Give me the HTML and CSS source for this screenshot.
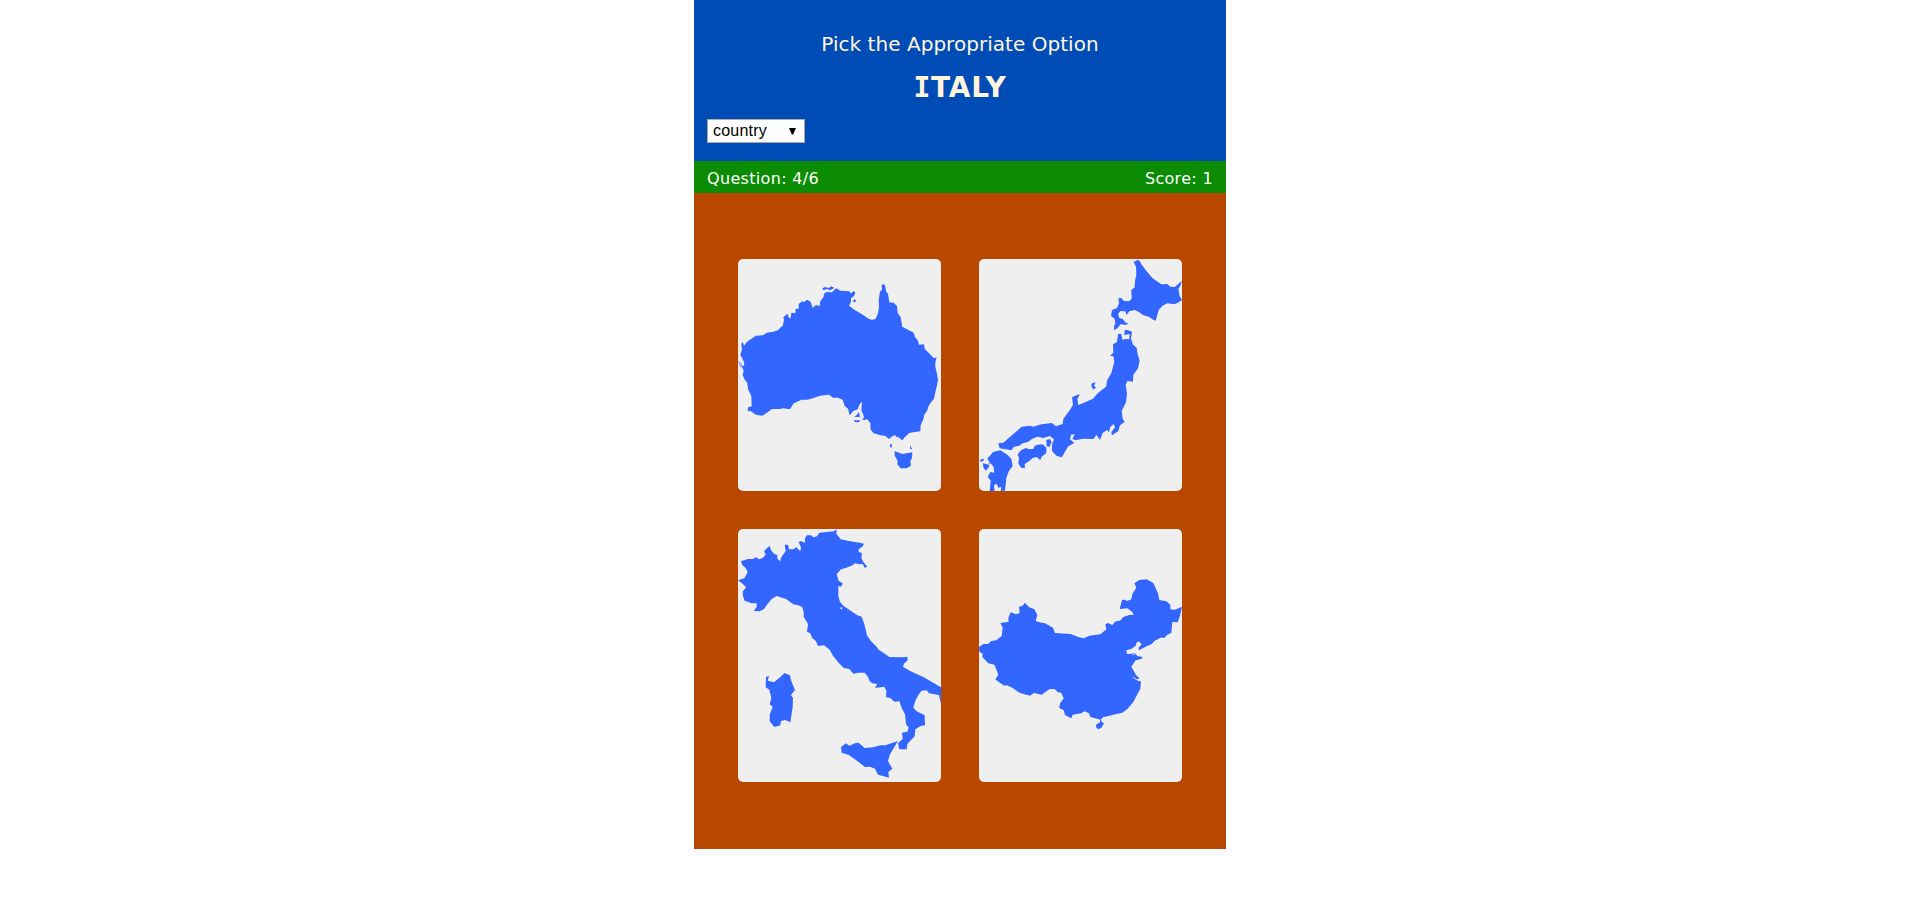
FILE: index.html
```html
<!DOCTYPE html>
<html lang="en">
<head>
<meta charset="utf-8">
<title>Pick the Appropriate Option</title>
<link rel="stylesheet" href="styles.css">
</head>
<body>
<main class="quiz">
  <header class="header">
    <p class="prompt">Pick the Appropriate Option</p>
    <h1 class="answer"><span class="serif-i">I</span>TALY</h1>
    <div class="select" role="combobox" aria-label="Category"><span class="select-text">country</span><svg class="arrow" viewBox="0 0 7 8"><path d="M0 1h7L4.2 7.5H2.8z"/></svg></div>
  </header>
  <div class="status"><span class="question">Question: 4/6</span><span class="score">Score: 1</span></div>
  <section class="board">
    <button class="card" aria-label="Australia">
      <svg class="map" viewBox="24 27 609 696">
        <path d="M38 275L42 287L50 277L62 268L78 257L99 256L110 248L130 245L145 240L152 232L158 228L162 210L160 202L172 191L177 204L182 204L184 188L196 190L197 177L206 176L206 162L217 154L221 157L232 149L242 156L248 173L258 165L269 168L271 154L281 140L282 131L290 126L306 127L318 115L332 122L358 124L362 130L372 123L376 129L371 139L363 145L363 155L357 167L374 180L391 190L404 198L413 205L426 210L437 206L444 190L447 172L446 150L450 125L456 119L455 106L460 102L466 108L468 124L474 132L478 157L491 158L501 168L503 189L512 202L517 230L531 238L551 248L555 262L563 270L567 284L582 283L584 296L600 313L612 325L620 322L616 337L616 350L621 372L624 389L620 410L616 427L612 446L604 456L596 467L592 481L583 494L580 508L572 526L571 544L550 547L538 549L525 561L517 571L505 562L498 560L495 555L487 559L477 567L465 557L450 556L440 552L431 550L422 539L421 519L410 506L405 511L396 508L402 503L400 495L394 481L396 455L389 463L383 478L370 483L359 496L354 476L344 468L338 449L324 443L309 443L297 434L270 437L248 445L233 449L215 449L198 457L190 461L180 478L160 475L149 477L126 477L115 485L97 497L77 494L63 484L53 482L54 472L65 469L64 438L54 418L52 399L43 387L38 374L41 362L36 351L43 345L41 334L31 314L36 299L34 282ZM494 603L517 612L547 607L546 624L541 634L543 647L530 655L512 655L502 643L503 632L494 617ZM277 115L285 111L296 114L304 109L313 114L300 121L291 117L280 121ZM387 486L390 501L373 501L380 495ZM372 511L391 511L387 517L374 516ZM480 583L486 583L485 593L480 591ZM540 586L547 598L541 597ZM371 148L378 150L376 157L370 156Z"/>
        <path class="coast" d="M26 334L31 350L38 351L32 338"/>
      </svg>
    </button>
    <button class="card" aria-label="Japan">
      <svg class="map" viewBox="27 27 609 696">
        <path d="M491 36L503 29L510 34L514 43L530 64L548 85L561 94L574 103L592 102L601 110L614 111L624 103L636 92L632 105L625 117L629 138L636 150L624 158L613 163L592 160L578 167L566 180L557 212L547 208L538 201L521 196L505 185L494 180L478 184L470 195L465 184L452 183L444 192L448 204L458 207L466 217L476 221L465 225L453 222L442 235L433 241L432 230L436 220L434 207L423 197L426 180L441 174L447 160L445 145L454 144L462 153L477 154L485 146L484 120L494 112L495 92L499 75L498 50ZM464 240L474 241L486 245L483 266L489 284L500 293L503 313L509 332L504 355L494 369L499 362L490 374L489 395L472 393L467 404L471 431L468 457L455 483L458 506L464 516L450 526L445 543L426 556L424 547L435 532L431 522L421 531L417 547L411 540L398 549L390 570L379 554L371 567L338 566L317 571L307 567L314 553L303 554L300 568L313 579L295 589L286 603L276 622L260 618L246 603L246 584L252 568L239 558L220 564L203 560L187 566L174 576L158 580L148 587L131 591L124 601L89 595L85 580L100 578L130 552L155 530L179 527L190 530L214 523L246 519L258 529L278 522L280 507L301 478L309 464L306 442L320 436L330 433L322 447L325 465L338 460L369 446L383 430L408 410L412 390L424 369L433 335L430 319L420 317L430 308L429 283L441 276L444 253L453 251L458 270L466 267L478 268L479 252L463 255ZM229 570L240 567L245 577L238 591L230 589ZM203 584L218 583L229 593L229 609L214 621L211 631L200 621L188 624L178 633L164 642L165 654L153 653L145 640L147 624L143 613L154 600L168 594L177 598L191 596L194 587ZM69 606L91 601L112 614L124 627L128 648L117 662L109 684L107 705L105 722L92 723L94 711L85 713L80 701L72 706L74 723L59 723L62 692L53 680L61 666L73 668L70 649L57 635L52 625L62 615ZM33 628L43 626L39 634L29 635ZM39 640L50 643L60 639L55 654L47 662L40 652ZM364 401L377 396L372 408L378 412L371 419L365 411Z"/>
        <path class="cut" d="M52 642L63 645L69 660M165 587L185 581L211 578L218 574"/>
      </svg>
    </button>
    <button class="card" aria-label="Italy">
      <svg class="map" viewBox="24 27 609 759">
        <path d="M33 123L43 121L53 117L68 117L78 112L88 118L99 113L107 104L102 93L119 77L123 91L133 102L142 105L142 116L150 124L154 112L167 93L164 74L174 74L177 88L190 88L199 82L211 94L213 82L206 67L212 63L226 68L224 57L230 46L243 46L251 52L261 49L268 38L297 35L311 34L320 28L319 41L332 58L361 64L389 68L402 71L397 80L386 88L386 96L396 99L394 114L400 126L412 140L404 143L398 132L389 133L374 130L368 136L345 145L333 148L320 163L326 182L339 191L332 200L325 198L325 229L330 245L340 257L363 273L382 286L395 290L403 312L411 346L423 364L437 377L447 390L467 403L478 411L519 412L532 410L533 421L522 431L519 440L540 453L580 471L607 487L633 502L633 552L627 525L597 520L590 511L575 512L565 525L556 542L550 563L560 574L584 586L585 616L572 618L556 628L554 649L544 659L532 672L530 688L508 688L504 670L518 656L516 638L532 635L536 623L528 612L525 583L515 564L508 544L493 545L482 535L468 531L469 512L463 500L435 504L442 492L427 490L419 484L414 471L404 458L384 458L370 461L358 447L340 443L324 426L309 407L299 389L282 376L264 378L258 364L247 354L240 339L231 336L234 313L229 303L221 291L221 276L217 262L205 256L190 253L168 237L140 228L125 237L112 253L102 267L89 274L71 273L80 261L80 250L65 250L44 242L39 229L38 215L48 202L38 191L24 181L43 175L53 157L47 144L36 134ZM163 459L180 466L183 481L195 510L183 525L189 534L188 561L181 607L166 600L153 603L151 616L133 621L119 604L119 584L128 560L119 553L124 535L118 509L107 502L108 471L117 468L113 482L132 487L151 471ZM504 663L498 673L480 703L474 723L487 746L475 756L477 773L459 768L444 764L435 746L420 740L405 741L374 717L355 704L335 698L333 681L348 670L358 677L375 670L386 668L404 684L430 682L451 676L466 676Z"/>
        <circle class="hole" cx="334" cy="265" r="3"/>
      </svg>
    </button>
    <button class="card" aria-label="China">
      <svg class="map" viewBox="27 27 609 759">
        <path d="M27 381L40 372L54 372L64 363L79 361L95 348L98 323L91 309L116 305L115 293L122 277L138 283L149 279L147 260L158 257L164 248L178 262L193 268L202 285L197 303L214 308L225 310L249 323L255 339L302 342L325 351L341 355L358 347L391 343L409 328L406 313L414 309L427 315L437 304L450 302L460 291L478 285L491 284L487 276L472 265L449 267L456 240L466 239L471 243L484 238L488 220L499 203L493 190L508 180L530 178L550 189L564 220L568 240L589 244L601 254L601 268L615 269L636 260L630 287L623 307L607 306L604 338L591 345L584 353L571 353L561 359L556 361L545 372L530 379L507 391L506 383L515 373L508 365L501 365L497 377L484 387L469 391L471 402L486 401L495 399L502 408L518 411L514 417L497 421L484 440L498 465L509 475L498 479L513 485L511 506L490 546L473 566L457 578L430 584L413 589L399 592L392 599L361 591L357 580L344 574L333 580L308 584L304 595L285 585L281 571L267 563L271 549L281 535L274 519L263 516L254 507L238 508L215 524L192 519L180 527L150 519L128 504L111 496L103 497L83 484L76 478L85 464L79 448L73 434L55 430L37 411L38 401L28 395ZM391 596L396 606L402 610L394 624L384 628L377 620L380 612L389 608Z"/>
        <path class="cut" d="M488 405L500 398M488 472L507 482"/>
      </svg>
    </button>
  </section>
</main>
</body>
</html>
```
FILE: styles.css
```css
* { box-sizing: border-box; }
body {
  margin: 0;
  background: #fff;
  font-family: Verdana, "DejaVu Sans", sans-serif;
}
.quiz { width: 532px; margin: 0 auto; }
.header {
  height: 161px;
  padding: 31px 13px 0;
  background: #004cb6;
  color: #fff5dc;
}
.prompt {
  margin: 0;
  font-size: 20px;
  line-height: 26px;
  letter-spacing: .04px;
  text-align: center;
}
.answer {
  margin: 15px 0 0;
  font-size: 28px;
  line-height: 32px;
  letter-spacing: .8px;
  text-align: center;
}
.serif-i {
  font-family: "DejaVu Sans Mono", monospace;
  line-height: 1;
}
.select {
  display: flex;
  align-items: center;
  justify-content: space-between;
  width: 98px;
  height: 24px;
  margin-top: 15px;
  padding: 0 8px 0 5px;
  border: 1px solid #a9a9a9;
  background: #fff;
  color: #000;
  font: 16px/20px "Liberation Sans", Arial, sans-serif;
  letter-spacing: .2px;
}
.select-text { padding-bottom: 1px; }
.arrow { width: 7px; height: 8px; }
.status {
  display: flex;
  justify-content: space-between;
  height: 32px;
  padding: 0 13px;
  background: #0c8c04;
  color: #fff;
  font-size: 16px;
  line-height: 35px;
  letter-spacing: .33px;
}
.board {
  display: grid;
  grid-template-columns: 203px 203px;
  grid-template-rows: 232px 253px;
  gap: 38px;
  justify-content: center;
  height: 656px;
  padding-top: 66px;
  background: #b84700;
}
.card {
  padding: 0;
  border: 0;
  border-radius: 5px;
  overflow: hidden;
  background: #efefef;
}
.map { display: block; width: 100%; height: 100%; fill: #36f; }
.coast { fill: none; stroke: #36f; stroke-width: 2; }
.cut { fill: none; stroke: #efefef; stroke-width: 2.5; }
.hole { fill: #efefef; }
```
